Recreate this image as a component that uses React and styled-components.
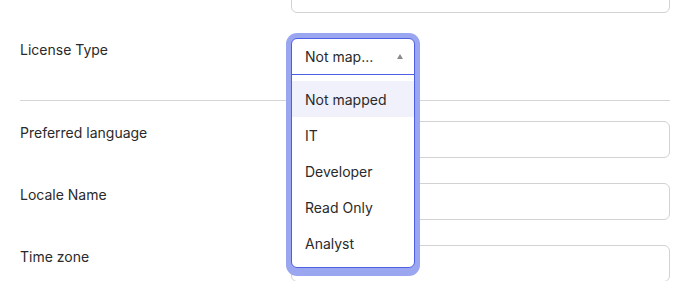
import React from 'react';
import styled, { createGlobalStyle } from 'styled-components';

const GlobalStyle = createGlobalStyle`
  html, body {
    margin: 0;
    padding: 0;
    background: #fff;
    overflow: hidden;
  }
  body {
    font-family: Inter, "Noto Sans", "Liberation Sans", sans-serif;
    color: #2a2a2a;
  }
`;

const Form = styled.div`
  width: 690px;
  box-sizing: border-box;
  padding: 0 20px;
  margin-top: -24px;
  display: flex;
  flex-direction: column;
`;

const Row = styled.div`
  display: grid;
  grid-template-columns: 271px 1fr;
  align-items: start;
  margin-top: ${(p) => p.gap || 0}px;
`;

const Label = styled.div`
  font-size: 14px;
  line-height: 18px;
  padding-top: 3px;
  color: #2a2a2a;
`;

const Input = styled.div`
  height: 37px;
  box-sizing: border-box;
  border: 1px solid #d2d2d2;
  border-radius: 6px;
  background: #fff;
`;

const Divider = styled.hr`
  border: 0;
  border-top: 1px solid #d6d6d6;
  margin: 25px 0 0;
  height: 0;
`;

const SelectSlot = styled.div`
  position: relative;
  height: 37px;
`;

const OpenSelect = styled.div`
  position: absolute;
  left: 0;
  top: 0;
  width: 122px;
  z-index: 10;
  background: #fff;
  border: 1px solid #4d5fe3;
  border-radius: 6px;
  box-shadow: 0 0 0 5px #9ba6f0, 0 3px 0 5px #9ba6f0;
  overflow: hidden;
`;

const SelectHead = styled.div`
  height: 36px;
  box-sizing: border-box;
  display: flex;
  align-items: center;
  justify-content: space-between;
  padding: 0 11px 0 13px;
  border-bottom: 1px solid #4d5fe3;
  font-size: 14px;
  color: #2a2a2a;
`;

const Caret = styled.span`
  width: 0;
  height: 0;
  border-left: 3.5px solid transparent;
  border-right: 3.5px solid transparent;
  border-bottom: 5px solid #8a8a8a;
  margin-top: -1px;
`;

const Menu = styled.ul`
  list-style: none;
  margin: 0;
  padding: 6px 0;
`;

const Option = styled.li`
  height: 36px;
  display: flex;
  align-items: center;
  padding: 0 13px;
  font-size: 14px;
  color: #2a2a2a;
  background: ${(p) => (p.active ? '#f0f1fb' : 'transparent')};
`;

const options = ['Not mapped', 'IT', 'Developer', 'Read Only', 'Analyst'];

export default function App() {
  return (
    <>
      <GlobalStyle />
      <Form>
        <Row>
          <div />
          <Input />
        </Row>
        <Row gap={25}>
          <Label>License Type</Label>
          <SelectSlot>
            <OpenSelect>
              <SelectHead>
                <span>Not map...</span>
                <Caret />
              </SelectHead>
              <Menu>
                {options.map((o, i) => (
                  <Option key={o} active={i === 0}>{o}</Option>
                ))}
              </Menu>
            </OpenSelect>
          </SelectSlot>
        </Row>
        <Divider />
        <Row gap={20}>
          <Label>Preferred language</Label>
          <Input />
        </Row>
        <Row gap={25}>
          <Label>Locale Name</Label>
          <Input />
        </Row>
        <Row gap={25}>
          <Label>Time zone</Label>
          <Input />
        </Row>
      </Form>
    </>
  );
}
